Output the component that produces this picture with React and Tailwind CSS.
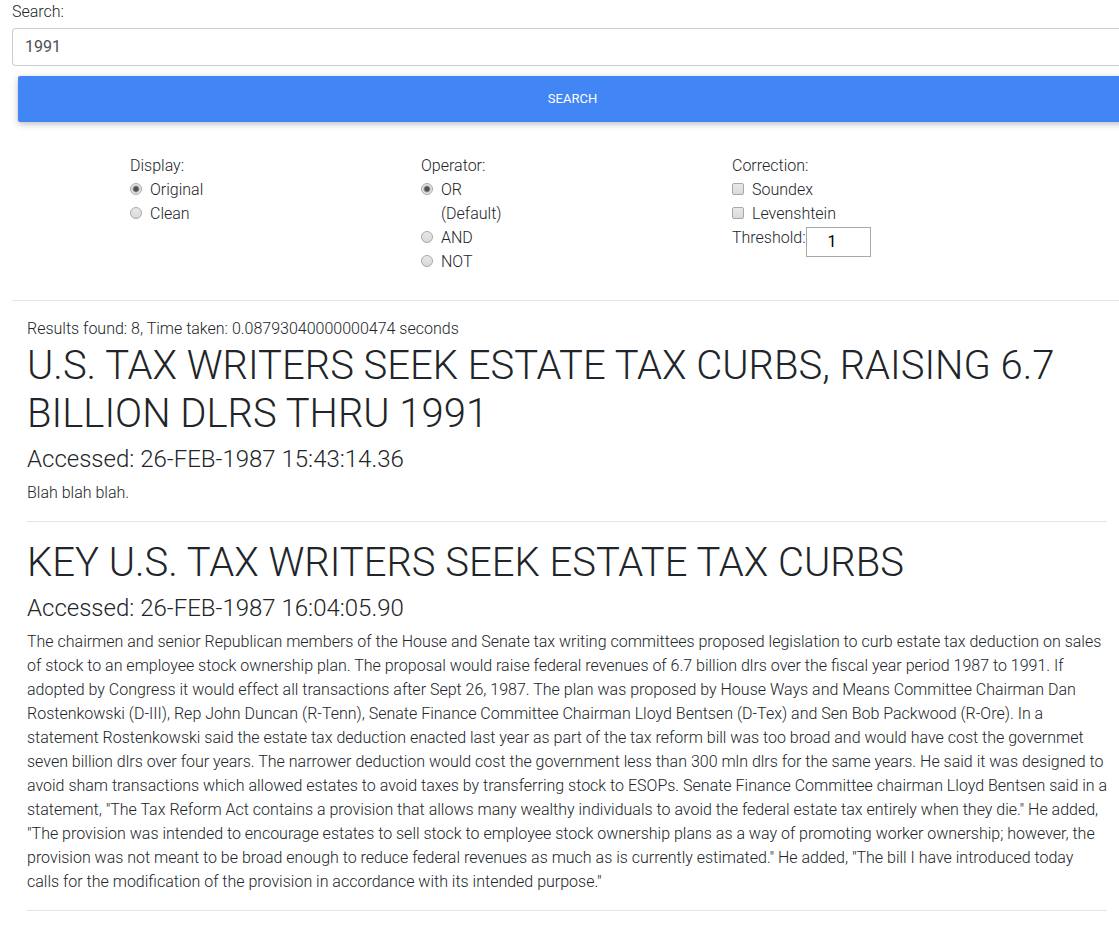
import { useState } from "react";

const results = [
  {
    title: "U.S. TAX WRITERS SEEK ESTATE TAX CURBS, RAISING 6.7 BILLION DLRS THRU 1991",
    accessed: "26-FEB-1987 15:43:14.36",
    body: "Blah blah blah.",
  },
  {
    title: "KEY U.S. TAX WRITERS SEEK ESTATE TAX CURBS",
    accessed: "26-FEB-1987 16:04:05.90",
    body: `The chairmen and senior Republican members of the House and Senate tax writing committees proposed legislation to curb estate tax deduction on sales of stock to an employee stock ownership plan. The proposal would raise federal revenues of 6.7 billion dlrs over the fiscal year period 1987 to 1991. If adopted by Congress it would effect all transactions after Sept 26, 1987. The plan was proposed by House Ways and Means Committee Chairman Dan Rostenkowski (D-III), Rep John Duncan (R-Tenn), Senate Finance Committee Chairman Lloyd Bentsen (D-Tex) and Sen Bob Packwood (R-Ore). In a statement Rostenkowski said the estate tax deduction enacted last year as part of the tax reform bill was too broad and would have cost the governmet seven billion dlrs over four years. The narrower deduction would cost the government less than 300 mln dlrs for the same years. He said it was designed to avoid sham transactions which allowed estates to avoid taxes by transferring stock to ESOPs. Senate Finance Committee chairman Lloyd Bentsen said in a statement, "The Tax Reform Act contains a provision that allows many wealthy individuals to avoid the federal estate tax entirely when they die." He added, "The provision was intended to encourage estates to sell stock to employee stock ownership plans as a way of promoting worker ownership; however, the provision was not meant to be broad enough to reduce federal revenues as much as is currently estimated." He added, "The bill I have introduced today calls for the modification of the provision in accordance with its intended purpose."`,
  },
];

const box =
  "mt-[5px] mr-2 h-3 w-3 shrink-0 appearance-none border border-[#a8a8a8] bg-linear-to-b from-[#e8e8e8] to-[#dadada]";
const radio =
  box +
  " rounded-full checked:bg-[radial-gradient(circle,#505050_0,#505050_2px,#e6e6e6_4px)]";
const checkbox = box + " rounded-xs checked:bg-none checked:bg-[#505050]";

function Choice({ type, name, label, note, ...rest }) {
  return (
    <label className="flex items-start">
      <input type={type} name={name} className={type === "radio" ? radio : checkbox} {...rest} />
      <span>
        {label}
        {note && <span className="block">{note}</span>}
      </span>
    </label>
  );
}

export default function App() {
  const [query, setQuery] = useState("1991");
  const [threshold, setThreshold] = useState(1);
  return (
    <main className="overflow-x-hidden font-['Roboto',sans-serif] text-base font-light text-[#212529]">
      <form className="pl-3" onSubmit={(e) => e.preventDefault()}>
        <label htmlFor="query" className="block pb-1">
          Search:
        </label>
        <input
          id="query"
          value={query}
          onChange={(e) => setQuery(e.target.value)}
          className="block h-[38px] w-full rounded-l border border-r-0 border-[#cecece] px-3 pb-0.5 font-normal text-[#495057] outline-none"
        />
        <div className="-mr-2 pt-[10px] pl-[6px]">
          <button
            type="submit"
            className="block h-[46px] w-full rounded-xs bg-[#4285f4] text-[13px] font-normal text-white uppercase shadow-[0_2px_5px_0_rgba(0,0,0,0.16),0_2px_10px_0_rgba(0,0,0,0.12)]"
          >
            Search
          </button>
        </div>
        <div className="grid grid-cols-[291fr_311fr_387fr] pt-8 pb-[26px] pl-[118px]">
          <fieldset>
            <legend>Display:</legend>
            <Choice type="radio" name="display" label="Original" defaultChecked />
            <Choice type="radio" name="display" label="Clean" />
          </fieldset>
          <fieldset>
            <legend>Operator:</legend>
            <Choice type="radio" name="operator" label="OR" note="(Default)" defaultChecked />
            <Choice type="radio" name="operator" label="AND" />
            <Choice type="radio" name="operator" label="NOT" />
          </fieldset>
          <fieldset>
            <legend>Correction:</legend>
            <Choice type="checkbox" label="Soundex" />
            <Choice type="checkbox" label="Levenshtein" />
            <label className="flex items-start">
              Threshold:
              <input
                type="text"
                inputMode="numeric"
                value={threshold}
                onChange={(e) => setThreshold(e.target.value)}
                className="mt-px h-[30px] w-[65px] border border-[#a9a9a9] pr-3 pb-0.5 text-center font-normal text-black"
              />
            </label>
          </fieldset>
        </div>
      </form>
      <section className="ml-3 border-t border-black/10 pt-4 pr-3 pl-[15px]">
        <p>Results found: 8, Time taken: 0.08793040000000474 seconds</p>
        {results.map((r) => (
          <article key={r.title} className="mb-4 border-b border-black/10 pb-4">
            <h1 className="mb-[7px] pt-px text-[40px] leading-[48px]">{r.title}</h1>
            <h2 className="mb-2 text-2xl leading-[28px]">Accessed: {r.accessed}</h2>
            <p className="-mr-px">{r.body}</p>
          </article>
        ))}
      </section>
    </main>
  );
}
